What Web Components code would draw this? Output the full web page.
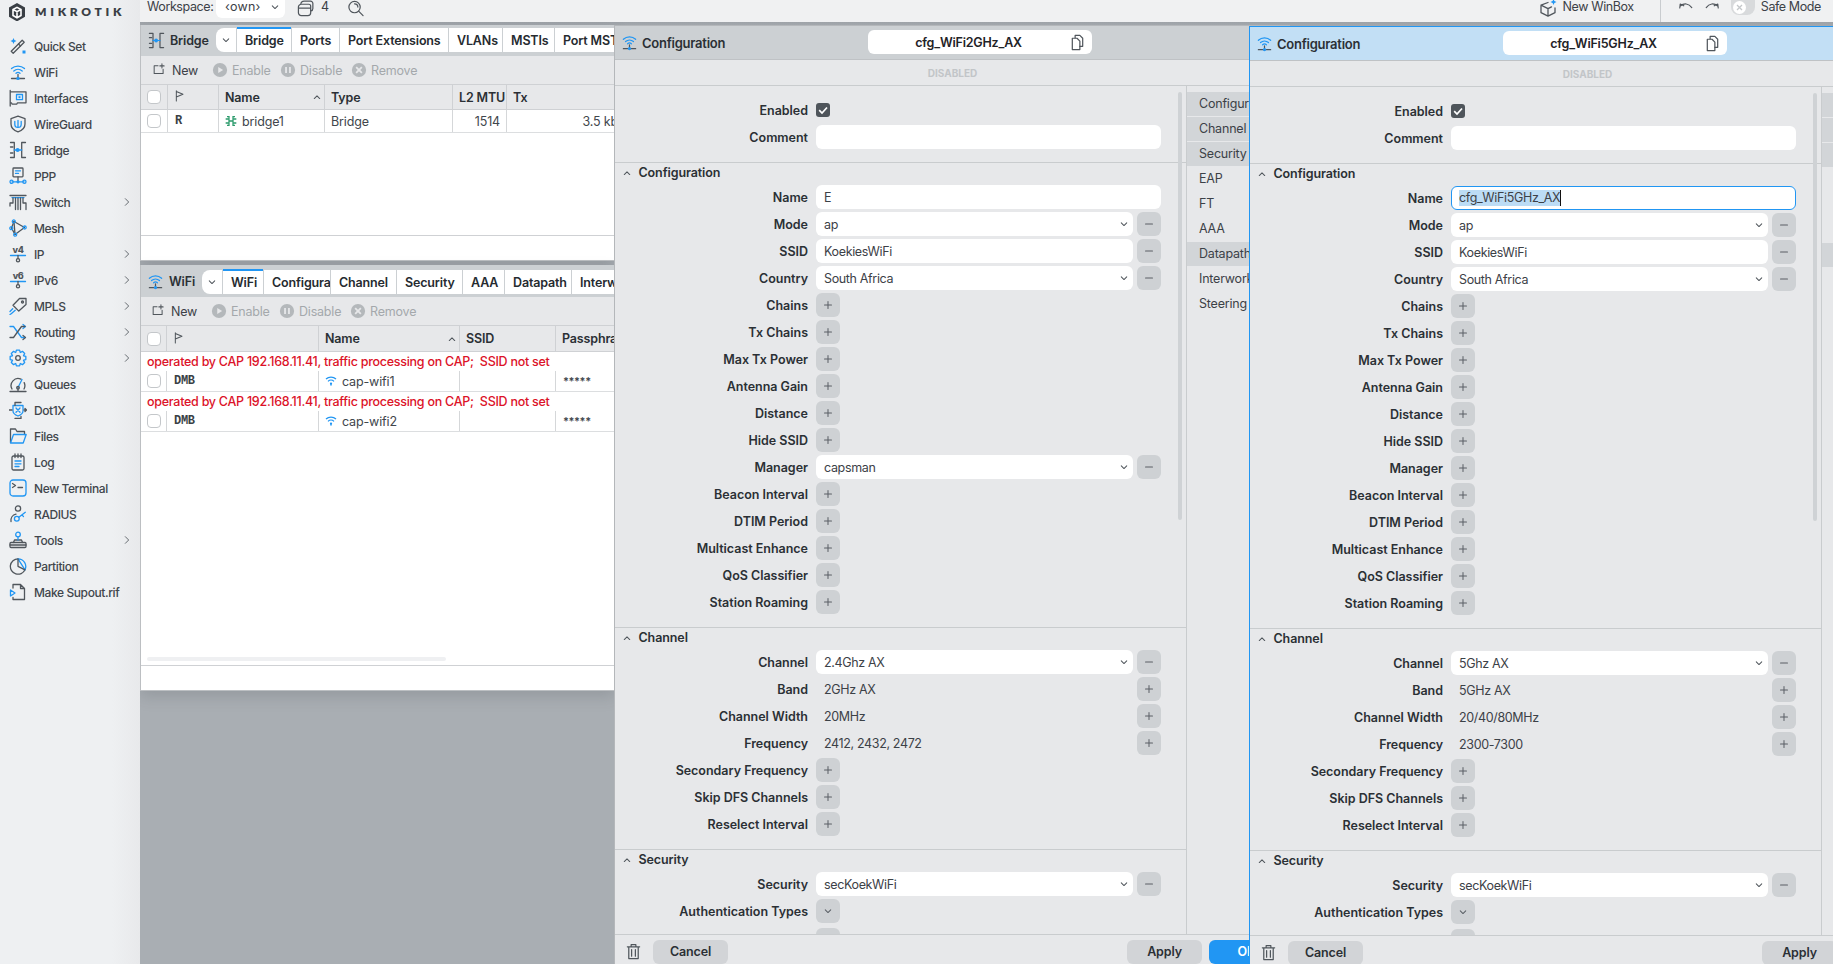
<!doctype html>
<html><head><meta charset="utf-8"><title>WinBox</title>
<style>
html,body{margin:0;height:100%;overflow:hidden;background:#a9aeb3}
body{font:500 12px Inter,"Liberation Sans",sans-serif;color:#2b3035;letter-spacing:-.1px}
</style></head><body>
<mt-app></mt-app>
<script>
const gear=(()=>{let d='',n=8;for(let i=0;i<n;i++){const a=i*2*Math.PI/n;const p=(r,o)=>[(9+r*Math.cos(a+o)).toFixed(2),(9+r*Math.sin(a+o)).toFixed(2)].join(' ');d+=(i?'L':'M')+p(6,-.38)+'L'+p(8,-.2)+'L'+p(8,.2)+'L'+p(6,.38)}return d+'Z'})();
const ICONS={
quickset:'<path class="d" d="M2.2 14.2 13.2 3.2l2 2L4.2 16.2z"/><path class="d" d="M9.5 7l2 2"/><path class="bf" d="M4.5 1l.9 2.1 2.1.9-2.1.9-.9 2.1-.9-2.1L1.5 4l2.1-.9z"/><rect class="bf" x="13.5" y="13.5" width="3" height="3"/>',
wifi:'<path class="b" d="M2.5 5.6a9.6 9.6 0 0 1 13 0M4.8 8a6.4 6.4 0 0 1 8.4 0M7 10.3a3 3 0 0 1 4 0"/><path class="d" d="M9 11.5v4M2.5 15.5h13"/><circle class="bf" cx="9" cy="15.4" r="1.7"/>',
interfaces:'<path class="d" d="M1.2 1.5V17M1.2 2.8H17v11H8.5l-.8 1.4H3.2l-.8-1.4H1.2"/><rect class="b" x="7.5" y="5.500" width="6" height="5.200"/><rect class="bf" x="9.500" y="7.200" width="2" height="2"/>',
wireguard:'<path class="d" d="M9 1.2l7 2.4v5.3c0 4-3 6.6-7 8-4-1.4-7-4-7-8V3.6z"/><path class="b" d="M5.800 6.300v2.900a3.200 3.200 0 0 0 6.400 0V6.300M9 5.300v7"/>',
bridge:'<path class="d" d="M1.500 1.500h3.800v15H1.500M1.500 6h2.300M1.500 12h2.300M16.500 1.500h-3.800v15h3.800"/><path class="b" d="M5.300 9h7.400"/><circle class="bf" cx="8.600" cy="9" r="2"/>',
ppp:'<rect class="d" x="4" y="1" width="10" height="8.800" rx=".8"/><path class="b" d="M6.500 3.800h5M6.500 6.400h3"/><path class="d" d="M9 9.800v5"/><path class="b" d="M3 14.800h12"/><circle class="b" cx="2.600" cy="14.800" r="1.600"/><circle class="b" cx="15.400" cy="14.800" r="1.600"/><circle class="bf" cx="9" cy="14.800" r="1.600"/>',
switch:'<path class="d" stroke-width="1.600" d="M1 2.500h16"/><path class="b" d="M3 4.600h12"/><path class="d" d="M4 5v5H1M1 10v3M6.500 5v11.500M9 5v11.500M11.500 5v11.500M14 5v5h3M17 10v6.500"/>',
mesh:'<path class="d" d="M5 2.500 15.500 8.500 6 15.500z"/><path class="d" d="M2.500 9 5 2.500M2.500 9 6 15.500"/><circle class="b" cx="4.800" cy="2.400" r="1.500"/><circle class="b" cx="2.300" cy="9.200" r="1.500"/><circle class="b" cx="6.200" cy="15.700" r="1.500"/><circle class="b" cx="15.700" cy="8.500" r="1.500"/>',
ipv4:'<text x="9" y="7.600" text-anchor="middle" font-size="9" font-weight="800" fill="#50565c" font-family="Inter">v4</text><path class="b" d="M1.500 10.500h15"/><path class="d" d="M9 10.500v3"/><circle class="d" cx="9" cy="15.200" r="1.600"/>',
ipv6:'<text x="9" y="7.600" text-anchor="middle" font-size="9" font-weight="800" fill="#50565c" font-family="Inter">v6</text><path class="b" d="M1.500 10.500h15"/><path class="d" d="M9 10.500v3"/><circle class="d" cx="9" cy="15.200" r="1.600"/>',
mpls:'<path class="d" d="M17 1.500h-6.500L4 8.300l5.800 5.800L17 7.500z"/><circle class="d" cx="13.500" cy="5" r="1"/><path class="b" d="M1 14.500l2.700-2.700M2.500 16.500l3.700-3.200M1 17.500l1.500-1"/>',
routing:'<path class="b" d="M1 3.500h3.500l8 11H16M14 1.500l2.500 2-2.500 2"/><path class="d" d="M1 14.500h3.500l8-11H16M14 12.500l2.500 2-2.500 2"/>',
system:'<path class="b" d="'+gear+'"/><circle class="d" cx="9" cy="9" r="2.300"/>',
queues:'<path class="d" d="M3 14a7 7 0 0 1 9-9.800M15.200 7.600A7 7 0 0 1 15 14M1 16.500h16M9 13.500v3"/><path class="b" stroke-width="1.600" d="M9 12.500 13 4.500"/><circle class="d" cx="9" cy="12.800" r="1.300"/>',
dot1x:'<path class="b" d="M4 4.500h10v5.500c0 2.500-2.500 4-5 5-2.500-1-5-2.500-5-5z"/><path class="b" d="M7 7l4 4.300M11 7l-4 4.300"/><path class="d" d="M0 9h3M15 9h2.500M16 7.500l1.500 1.500-1.500 1.500M6 4.500V1.500h6M6 17.500h6v-2"/>',
files:'<path class="d" d="M1.500 15.500V2h5l1.500 2.500h7.500v3"/><path class="b" d="M1.500 16h12.700l3-8.500H4.500z"/>',
log:'<rect class="d" x="3" y="3" width="12" height="14" rx="1.500"/><path class="d" d="M6 1v3.500M9 1v3.500M12 1v3.500"/><path class="b" d="M6 8h6M6 10.800h6M6 13.500h4"/>',
terminal:'<rect class="b" x="1" y="1" width="16" height="16" rx="3"/><path class="d" d="M3.500 4.500 6.500 6.500 3.500 8.500M9 8.500h4.500"/>',
radius:'<circle class="d" cx="9" cy="3.500" r="2.600"/><path class="d" d="M2 16.500c-.5-3.500 1.500-6.500 5-7.300"/><circle class="b" cx="7.800" cy="13.800" r="2.400"/><path class="b" d="M9.800 12.300l6.500-5M13 9.800l1.500 1.800"/>',
tools:'<rect class="d" x="1" y="11.500" width="16" height="5" rx="1"/><path class="d" d="M1 14h16M4.500 11.500l1-2.500h7l1 2.500"/><path class="b" d="M9 6v3"/><circle class="b" cx="9" cy="3.500" r="2.300"/>',
partition:'<path class="d" d="M9 1.800a7.700 7.700 0 1 0 7 11"/><path class="b" d="M9 1.800a7.700 7.700 0 0 1 7 11z"/><path class="d" d="M9 1.800v7.500l7 3.500"/>',
supout:'<path class="d" d="M4 5V1.500h7.500l4 4v11H4V14.500M11.500 1.500v4h4"/><path class="b" d="M1.500 7l4.500 3-4.500 3z"/>',
'new':'<path class="d" d="M6.500 3.500H1.500V13.500H13V8M11.500 1v5.500M8.800 3.700h5.500"/>',
flag:'<path class="d" stroke-width="1.500" d="M3 1v13M3 2l8.500 3.500L3 9"/>',
chev:'<path class="d" d="M5.500 7.500 9 11l3.500-3.500" stroke-width="1.800"/>',
up:'<path class="d" d="M5.500 11 9 7.500l3.500 3.500" stroke-width="1.800"/>',
right:'<path class="d" d="M6.500 4 11.500 9l-5 5" stroke-width="2"/>',
enable:'<circle cx="9" cy="9" r="8" fill="#b4b8bb"/><path d="M7 5.500v7l5.500-3.500z" fill="#e7e8ea"/>',
disable:'<circle cx="9" cy="9" r="8" fill="#b4b8bb"/><path stroke="#e7e8ea" stroke-width="2" fill="none" d="M6.800 5.500v7M11.200 5.500v7"/>',
remove:'<circle cx="9" cy="9" r="8" fill="#b4b8bb"/><path stroke="#e7e8ea" stroke-width="2" fill="none" d="M5.800 5.800l6.400 6.400M12.200 5.800l-6.400 6.400"/>',
brg:'<path fill="none" stroke="#2c9b6c" stroke-width="1.900" d="M3 2.500h3v13H3M15 2.500h-3v13h3M1 6h4M1 12h4M13 6h4M13 12h4M5 9h8"/>',
wifismall:'<path fill="none" stroke="#2196f3" stroke-width="1.900" d="M1.500 6a11 11 0 0 1 15 0M4.500 9.500a6.500 6.500 0 0 1 9 0"/><circle cx="9" cy="13" r="1.700" fill="#2196f3"/><path stroke="#2196f3" stroke-width="1.600" d="M9 13v3"/>',
copy:'<path class="d" d="M6.500 4V1.500h5l3 3V13H11.500"/><path class="d" d="M3.500 4.500h5l3 3v9h-8z"/>',
trash:'<path class="d" stroke-width="1.500" d="M2.500 4h13M6.500 4V1.800h5V4M4 4v12.500h10V4M7 7v7M11 7v7"/>',
expand:'<path class="d" stroke-width="1.600" d="M2 11v5h5M11 2h5v5"/>',
winbox:'<path class="d" stroke-width="1.500" d="M9 3.500 2 6.200v7.500l7 3.500 7-3.500V9M2 6.200l7 3.500v7.500M9 9.700l3.500-1.800"/><path class="bf" d="M14.500 0l.9 2.100 2.100.9-2.100.9-.9 2.100-.9-2.100-2.100-.9 2.100-.9z"/>',
undo:'<path class="d" stroke-width="1.600" d="M2 9 2.500 4.500 6.500 6.500M3 6.500c3.500-3 9-3 12.500 2"/>',
redo:'<path class="d" stroke-width="1.600" d="M16 9 15.500 4.500 11.500 6.500M15 6.500c-3.500-3-9-3-12.500 2"/>',
stack:'<path class="d" stroke-width="1.500" d="M1.500 7.500a3 3 0 0 1 3-3h8a2 2 0 0 1 2 2v7a3 3 0 0 1-3 3h-7a3 3 0 0 1-3-3zM1.500 8.500h13M4 4.500c0-2 1.500-3.300 3.500-3.300h6.800a2.500 2.500 0 0 1 2.500 2.500V9c0 1.500-1 2.500-2.300 2.800"/>',
search:'<circle class="d" stroke-width="1.500" cx="8" cy="7.500" r="6"/><path class="d" stroke-width="1.500" d="M12.300 11.800 17 16.500M8 4a3.500 3.500 0 0 1 3.500 3.500"/>',
logo:'<path fill="#3a3f45" d="M9 0l8 4.600v9.200L9 18.400 1 13.800V4.600z"/><path fill="none" stroke="#fff" stroke-width="1.600" d="M5 6.500v6l4 2.300 4-2.300v-6L9 4.300zM5 6.500l4 2.200 4-2.200M9 8.700v6"/>',
plus:'<path class="d" stroke-width="2" d="M4.500 9h9M9 4.500v9"/>',
minus:'<path class="d" stroke-width="2.200" d="M4.500 9h9"/>'
};
class MtIcon extends HTMLElement{connectedCallback(){
  const s=this.getAttribute('size')||18,h=this.getAttribute('h')||s;
  this.shadowRoot||this.attachShadow({mode:'open'});
  this.shadowRoot.innerHTML=`<style>:host{display:inline-flex;flex:none;width:${s}px;height:${h}px}svg{display:block}
  .d{fill:none;stroke:${this.getAttribute('color')||'#50565c'};stroke-width:1.3;stroke-linejoin:round;stroke-linecap:round}
  .b{fill:none;stroke:#2196f3;stroke-width:1.3;stroke-linejoin:round;stroke-linecap:round}.bf{fill:#2196f3}</style>
  <svg width="${s}" height="${h}" viewBox="0 0 18 18">${ICONS[this.getAttribute('name')]||''}</svg>`;
}}
customElements.define('mt-icon',MtIcon);

class MtNavItem extends HTMLElement{connectedCallback(){
  this.attachShadow({mode:'open'}).innerHTML=`<style>:host{display:flex;align-items:center;height:26px;padding-left:9px;color:#41464c;font-size:12px;letter-spacing:-.4px}
  .t{margin-left:7px;flex:1;white-space:nowrap}.a{margin-right:7px}</style>
  <mt-icon name="${this.getAttribute('icon')}"></mt-icon><span class="t"><slot></slot></span>${this.hasAttribute('arrow')?'<mt-icon class="a" name="right" size="12"></mt-icon>':''}`;
}}
customElements.define('mt-nav-item',MtNavItem);

class MtSidebar extends HTMLElement{connectedCallback(){
  const items=[['quickset','Quick Set'],['wifi','WiFi'],['interfaces','Interfaces'],['wireguard','WireGuard'],['bridge','Bridge'],['ppp','PPP'],['switch','Switch',1],['mesh','Mesh'],['ipv4','IP',1],['ipv6','IPv6',1],['mpls','MPLS',1],['routing','Routing',1],['system','System',1],['queues','Queues'],['dot1x','Dot1X'],['files','Files'],['log','Log'],['terminal','New Terminal'],['radius','RADIUS'],['tools','Tools',1],['partition','Partition'],['supout','Make Supout.rif']];
  this.attachShadow({mode:'open'}).innerHTML=`<style>:host{display:block;width:140px;flex:none;background:linear-gradient(90deg,#eef0f2 80%,#e8e9eb);overflow:hidden}
  .logo{display:flex;align-items:center;height:33px;padding:0 0 9px 8px;box-sizing:border-box}
  .w{margin-left:9px;font:800 12px Lato,Inter,sans-serif;letter-spacing:3.700px;color:#3a3f45;line-height:1}</style>
  <div class="logo"><mt-icon name="logo" size="18"></mt-icon><span class="w">MIKROTIK</span></div>
  ${items.map(i=>`<mt-nav-item icon="${i[0]}" ${i[2]?'arrow':''}>${i[1]}</mt-nav-item>`).join('')}`;
}}
customElements.define('mt-sidebar',MtSidebar);

class MtTopbar extends HTMLElement{connectedCallback(){
  this.attachShadow({mode:'open'}).innerHTML=`<style>:host{display:flex;height:22px;box-sizing:border-box;background:#f0f1f2;font-size:12.500px;font-weight:400;letter-spacing:-.4px;color:#3c4147;line-height:13px;align-items:flex-start;overflow:hidden}
  span{white-space:nowrap}.ws{margin-left:7px;width:69px}.sel{width:69px;height:18px;background:#fff;border-radius:0 0 6px 6px;display:flex;align-items:flex-start;box-sizing:border-box;padding-left:9px}
  .sel span{flex:1;letter-spacing:.2px}.sep{width:1px;height:22px;background:#c9cccf}
  .sp{flex:1}.kn{width:13px;height:13px;border-radius:50%;background:#fff;display:flex}</style>
  <span class="ws">Workspace:</span><div class="sel"><span>‹own›</span><mt-icon name="chev" size="14" style="margin-right:3px"></mt-icon></div>
  <mt-icon name="stack" size="17" style="margin-left:12px"></mt-icon><span style="margin-left:7px">4</span><mt-icon name="search" size="17" style="margin-left:18px"></mt-icon>
  <span class="sp"></span>
  <mt-icon name="winbox" size="18" style="margin-top:-1px"></mt-icon><span style="margin-left:6px">New WinBox</span>
  <div class="sep" style="margin-left:26px"></div>
  <mt-icon name="undo" size="16" style="margin:0 0 0 17px"></mt-icon><mt-icon name="redo" size="16" style="margin-left:10px"></mt-icon>
  <div style="margin-left:11px;width:24px;height:15px;border-radius:0 0 8px 8px;background:#d8dadc;display:flex;padding:1px 0 0 2px;box-sizing:border-box"><div class="kn"><svg width="13" height="13" viewBox="0 0 13 13"><path d="M4 4l5 5M9 4l-5 5" stroke="#c4c7ca" stroke-width="1.300" fill="none"/></svg></div></div>
  <span style="margin-left:6px">Safe Mode</span><div style="width:12px"></div>`;
}}
customElements.define('mt-topbar',MtTopbar);

class MtTabs extends HTMLElement{connectedCallback(){
  const t=JSON.parse(this.getAttribute('tabs'));const top=this.getAttribute('top');const h=this.getAttribute('height');
  this.attachShadow({mode:'open'}).innerHTML=`<style>:host{display:flex;flex:1;min-width:0;overflow:hidden;padding-top:${top}px;font-weight:600;font-size:12.5px;letter-spacing:-.15px;color:#262b30}
  div{height:${h}px;box-sizing:border-box;background:#fff;margin-right:1px;flex:none;white-space:nowrap;overflow:hidden;display:flex;align-items:center;padding:0 0 0 8px}
  .a{border-top:2px solid #2196f3;margin-top:-1px;height:${+h+1}px}
  .dd{width:20px;padding:0 0 0 3px;border-radius:8px 0 0 8px}</style>
  <div class="dd"><mt-icon name="chev" size="14"></mt-icon></div>
  ${t.map((x,i)=>`<div class="${i==0?'a':''}" style="width:${x[1]}px">${x[0]}</div>`).join('')}`;
}}
customElements.define('mt-tabs',MtTabs);

class MtToolbar extends HTMLElement{connectedCallback(){
  const l=this.getAttribute('left');
  this.attachShadow({mode:'open'}).innerHTML=`<style>:host{display:flex;height:28px;align-items:center;padding-left:${l}px;border-bottom:1px solid #cfd1d4;background:#e7e8ea;font-weight:400;font-size:12.5px;letter-spacing:-.2px;color:#a4a8ac;flex:none}
  div{display:flex;align-items:center;gap:4px;flex:none}.n{color:#3c4147;gap:5px}</style>
  <div class="n" style="width:59px"><mt-icon name="new" size="14"></mt-icon>New</div>
  <div style="width:68px"><mt-icon name="enable" size="16"></mt-icon>Enable</div>
  <div style="width:71px"><mt-icon name="disable" size="16"></mt-icon>Disable</div>
  <div><mt-icon name="remove" size="16"></mt-icon>Remove</div>`;
}}
customElements.define('mt-toolbar',MtToolbar);

class MtCheck extends HTMLElement{connectedCallback(){
  this.attachShadow({mode:'open'}).innerHTML=`<style>:host{display:block;width:14px;height:14px;box-sizing:border-box;background:#fff;border:1px solid #c4c7ca;border-radius:4px;flex:none}</style>`;
}}
customElements.define('mt-check',MtCheck);

class MtTable extends HTMLElement{
  set data(d){this._d=d;this.render()}
  render(){
    const d=this._d,cols=d.cols,tpl=cols.join('px ')+'px';
    const hcell=c=>`<div class="c ${c.sort?'s':''}">${c.check?'<mt-check></mt-check>':c.flag?'<mt-icon name="flag" size="14"></mt-icon>':`<span>${c.t}</span>`}${c.sort?'<mt-icon name="up" size="14"></mt-icon>':''}</div>`;
    const bcell=c=>`<div class="c ${c.r?'r':''} ${c.m?'m':''} ${c.st?'st':''}">${c.check?'<mt-check></mt-check>':c.icon?`<mt-icon name="${c.icon}" size="12"></mt-icon><span style="margin-left:5px">${c.t}</span>`:`<span>${c.t||''}</span>`}</div>`;
    this.shadowRoot.innerHTML=`<style>:host{display:block;flex:1;background:#fff;overflow:hidden;min-height:0}
    .h,.b{display:grid;grid-template-columns:${tpl};}
    .h{height:${d.hh}px;background:#e7e8ea;border-bottom:1px solid #cfd1d4;font-size:12.5px;font-weight:600;letter-spacing:-.15px;color:#2b3035}
    .b{height:${d.rh}px;font-size:12.5px;font-weight:400;letter-spacing:-.15px;color:#41464c}
    .row{border-bottom:1px solid #dcdee0}
    .c{display:flex;align-items:center;padding-left:6px;border-right:1px solid #d5d7d9;box-sizing:border-box;white-space:nowrap;overflow:hidden;min-width:0}
    .h .c{border-right-color:#cfd1d4}
    .s{justify-content:space-between;padding-right:0}.r{justify-content:flex-end;padding-right:6px}
    .m{font:700 12px "Liberation Mono",monospace;color:#3a3f45;letter-spacing:-.3px;padding-left:7px}
    .st{font-size:11px;font-weight:600;letter-spacing:-.4px;padding-left:7px}
    .msg{height:19px;line-height:20px;padding-left:6px;color:#dc1228;font-size:12.5px;font-weight:500;letter-spacing:-.265px;white-space:nowrap}</style>
    <div class="h">${d.head.map(hcell).join('')}</div>
    ${d.rows.map(r=>`<div class="row">${r.msg?`<div class="msg">${r.msg}</div>`:''}<div class="b">${r.cells.map(bcell).join('')}</div></div>`).join('')}`;
  }
}
customElements.define('mt-table',MtTable);

class MtListWindow extends HTMLElement{connectedCallback(){
  const c=DATA[this.getAttribute('kind')];
  const r=this.attachShadow({mode:'open'});
  r.innerHTML=`<style>:host{position:absolute;left:${c.x}px;top:${c.y}px;width:475px;height:${c.h}px;box-sizing:border-box;border:1px solid #bcbfc2;border-top:0;display:flex;flex-direction:column;background:#fff;overflow:hidden;box-shadow:0 6px 14px rgba(60,65,70,.18)}
  .hd{display:flex;height:${c.hdh}px;flex:none;background:#ccd0d3;}
  .t{width:${c.tw}px;flex:none;display:flex;align-items:center;padding-left:${c.il}px;box-sizing:border-box;font-weight:600;font-size:12.5px;gap:${c.ig}px;letter-spacing:-.15px}
  .sb{height:4px;background:#eff0f2;border-radius:2px;width:299px;margin:0 0 4px 6px;flex:none}
  .ft{height:${c.ft}px;flex:none;border-top:1px solid #cfd1d4;background:#fff}</style>
  <div class="hd"><div class="t"><mt-icon name="${c.icon}" size="17"></mt-icon>${c.title}</div><mt-tabs top="${c.tt}" height="${c.th}" tabs='${JSON.stringify(c.tabs)}'></mt-tabs></div>
  <mt-toolbar left="${c.tl}"></mt-toolbar><mt-table></mt-table>${c.sb?'<div class="sb"></div>':''}<div class="ft"></div>`;
  const t=r.querySelector('mt-table');t.attachShadow({mode:'open'});t.data=c.table;
}}
customElements.define('mt-list-window',MtListWindow);

class MtField extends HTMLElement{connectedCallback(){
  const a=k=>this.getAttribute(k),k=a('type'),v=a('value')||'',side=a('side');
  const btn=g=>`<button><mt-icon name="${g}" size="14" color="#5a5f65"></mt-icon></button>`;
  let m='';
  if(k=='check')m=`<div class="ck"><svg width="14" height="14" viewBox="0 0 14 14"><path d="M3.200 7.200 6 10l5-5.500" fill="none" stroke="#fff" stroke-width="1.700"/></svg></div>`;
  else if(k=='btn')m=btn(a('glyph'));
  else{
    const txt=a('focus')!=null?`<span class="sel">${v}</span>`:`<span>${v}</span>`;
    m=`<div class="box ${k} ${a('focus')!=null?'f':''}">${txt}${k=='select'?'<mt-icon name="chev" size="14" color="#50565c"></mt-icon>':''}</div>${side?btn(side):''}`;
  }
  this.attachShadow({mode:'open'}).innerHTML=`<style>:host{display:flex;gap:4px;align-items:center;height:24px;font-size:12.500px;font-weight:400;letter-spacing:-.35px;color:#3c4147}
  .box{flex:1;height:24px;box-sizing:border-box;background:#fff;border-radius:6px;display:flex;align-items:center;padding:0 2px 0 8px;min-width:0;white-space:nowrap}
  .box span{flex:none}.box.select span{flex:1}
  .readonly{background:none}
  .f{border:1px solid #2196f3;padding-left:7px}
  .f span.sel{background:#bcdcf5;border-right:1px solid #111;height:16px;line-height:16px;color:#3c4147}
  button{all:unset;display:flex;align-items:center;justify-content:center;width:24px;height:24px;flex:none;border-radius:6px;background:#ced1d4}
  .ck{width:14px;height:14px;border-radius:3px;background:#4f555b}.ck svg{display:block}</style>${m}`;
}}
customElements.define('mt-field',MtField);

class MtFormRow extends HTMLElement{connectedCallback(){
  this.attachShadow({mode:'open'}).innerHTML=`<style>:host{display:grid;grid-template-columns:193px 1fr;column-gap:8px;height:24px;align-items:center;padding-right:25px}
  label{text-align:right;font-weight:600;font-size:12.5px;letter-spacing:-.02px;color:#2b3035;white-space:nowrap}</style>
  <label>${this.getAttribute('label')}</label><div><slot></slot></div>`;
}}
customElements.define('mt-form-row',MtFormRow);

class MtSection extends HTMLElement{connectedCallback(){
  this.attachShadow({mode:'open'}).innerHTML=`<style>:host{display:block;border-top:1px solid #c9ccce;padding-bottom:13px}
  .t{height:22px;display:flex;align-items:center;padding:0 0 3px 5px;gap:2px;font-weight:600;font-size:12.5px;letter-spacing:-.1px;color:#2b3035;box-sizing:border-box}
  .r{display:flex;flex-direction:column;gap:3px}</style>
  <div class="t"><mt-icon name="up" size="14"></mt-icon><span style="margin-left:2.500px">${this.getAttribute('title')}</span></div><div class="r"><slot></slot></div>`;
}}
customElements.define('mt-section',MtSection);

const row=(l,t,v,s,x='')=>`<mt-form-row label="${l}"><mt-field type="${t}" ${v!=null?`value="${v}"`:''} ${s?`side="${s}"`:''} ${x}></mt-field></mt-form-row>`;
const plus=l=>`<mt-form-row label="${l}"><mt-field type="btn" glyph="plus"></mt-field></mt-form-row>`;
class MtConfigWindow extends HTMLElement{connectedCallback(){
  const a=k=>this.getAttribute(k),c=a('active')!=null;
  const s=c?{n:'cfg_WiFi5GHz_AX',name:row('Name','text','cfg_WiFi5GHz_AX','','focus'),mgr:plus('Manager'),ch:'5Ghz AX',band:'5GHz AX',w:'20/40/80MHz',f:'2300-7300'}:
    {n:'cfg_WiFi2GHz_AX',name:row('Name','text','E'),mgr:row('Manager','select','capsman','minus'),ch:'2.4Ghz AX',band:'2GHz AX',w:'20MHz',f:'2412, 2432, 2472'};
  const nav=[['Configuration',1],['Channel',1],['Security',1],['EAP'],['FT'],['AAA'],['Datapath',1],['Interworking'],['Steering']];
  this.attachShadow({mode:'open'}).innerHTML=`<style>:host{position:absolute;left:${a('x')}px;top:${a('y')}px;width:676px;height:939px;box-sizing:border-box;display:flex;flex-direction:column;background:#e7e8ea;overflow:hidden;border-left:1px solid ${c?'#2196f3':'#b4b7ba'};border-top:1px solid ${c?'#2196f3':'#b4b7ba'}}
  .hd{display:grid;grid-template-columns:253px 224px 1fr;height:33px;flex:none;background:${c?'#c2dff5':'#ccd0d3'};border-bottom:1px solid #bfc2c5}
  .tt{display:flex;align-items:center;padding-left:6px;gap:4px;font-weight:600;font-size:13px;letter-spacing:-.25px;color:#2b3035}
  .nm{margin-top:4px;height:24px;background:#fff;border-radius:6px;display:flex;align-items:center;font-weight:600;font-size:12.500px;letter-spacing:-.2px;color:#1f2327}
  .nm span{flex:1;text-align:center}
  .ex{display:flex;align-items:center;justify-content:flex-end;padding-right:20px}
  .st{height:26px;flex:none;border-bottom:1px solid #c9ccce;display:flex;align-items:center;justify-content:center;font-weight:700;font-size:10px;letter-spacing:0;color:#c2c5c8;box-sizing:border-box}
  .md{flex:1;display:flex;min-height:0;overflow:hidden}
  .fm{width:572px;box-sizing:border-box;flex:none;border-right:1px solid #c9ccce;overflow:hidden;position:relative}
  .top{padding:12px 0 13px;display:flex;flex-direction:column;gap:3px}
  .sc{position:absolute;right:4px;top:6px;width:4px;height:428px;border-radius:2px;background:#cfd2d5}
  .nv{flex:1;padding-top:6px;font-weight:400;font-size:12.500px;letter-spacing:-.2px;color:#3c4147}
  .nv div{height:24px;margin-bottom:1px;line-height:24px;padding-left:12px;white-space:nowrap}.nv .on{background:#d2d5d8}
  .ft{height:24px;flex:none;border-top:1px solid #c9ccce;display:flex;align-items:flex-start;padding:5px 6px 0 10px}
  .ft button{all:unset;height:24px;width:75px;border-radius:6px;background:#d2d4d7;text-align:center;line-height:24px;font-weight:600;font-size:12.500px;letter-spacing:-.15px;color:#2b3035;flex:none}
  .ft .ok{background:#2196f3;color:#fff;margin-left:7px}</style>
  <div class="hd"><div class="tt"><mt-icon name="wifi" size="17"></mt-icon>Configuration</div><div class="nm"><span>${s.n}</span><mt-icon name="copy" size="17" style="margin-right:6px"></mt-icon></div><div class="ex"><mt-icon name="expand" size="12"></mt-icon></div></div>
  <div class="st">DISABLED</div>
  <div class="md"><div class="fm">
    <div class="top">${row('Enabled','check')}${row('Comment','text','')}</div>
    <mt-section title="Configuration">${s.name}${row('Mode','select','ap','minus')}${row('SSID','text','KoekiesWiFi','minus')}${row('Country','select','South Africa','minus')}
      ${['Chains','Tx Chains','Max Tx Power','Antenna Gain','Distance','Hide SSID'].map(plus).join('')}${s.mgr}
      ${['Beacon Interval','DTIM Period','Multicast Enhance','QoS Classifier','Station Roaming'].map(plus).join('')}</mt-section>
    <mt-section title="Channel">${row('Channel','select',s.ch,'minus')}${row('Band','readonly',s.band,'plus')}${row('Channel Width','readonly',s.w,'plus')}${row('Frequency','readonly',s.f,'plus')}
      ${['Secondary Frequency','Skip DFS Channels','Reselect Interval'].map(plus).join('')}</mt-section>
    <mt-section title="Security">${row('Security','select','secKoekWiFi','minus')}<mt-form-row label="Authentication Types"><mt-field type="btn" glyph="chev"></mt-field></mt-form-row><mt-form-row label="" style="margin-top:2px"><mt-field type="btn" glyph="chev"></mt-field></mt-form-row></mt-section>
    <div class="sc"></div></div>
    <div class="nv">${nav.map(n=>`<div class="${n[1]?'on':''}">${c?'&nbsp;':n[0]}</div>`).join('')}</div></div>
  <div class="ft"><mt-icon name="trash" size="17" style="margin:3px 11px 0 0"></mt-icon><button>Cancel</button><span style="flex:1"></span><button>Apply</button><button class="ok">${c?'':'OK'}</button></div>`;
}}
customElements.define('mt-config-window',MtConfigWindow);

const DATA={
 bridge:{x:0,y:3,h:236,hdh:31,title:'Bridge',icon:'bridge',tw:75,il:7,ig:5,tt:3,th:24,tl:12,ft:24,
  tabs:[['Bridge',54],['Ports',47],['Port Extensions',108],['VLANs',53],['MSTIs',51],['Port MST',80]],
  table:{cols:[27,51,106,128,54,132],hh:24,rh:22,
   head:[{check:1},{flag:1},{t:'Name',sort:1},{t:'Type'},{t:'L2 MTU'},{t:'Tx'}],
   rows:[{cells:[{check:1},{t:'R',m:1},{t:'bridge1',icon:'brg'},{t:'Bridge'},{t:'1514',r:1},{t:'3.5 kbps',r:1}]}]}},
 wifi:{x:0,y:243,h:426,hdh:32,title:'WiFi',icon:'wifi',tw:61,il:6,ig:5,tt:5,th:24,tl:11,ft:24,sb:1,
  tabs:[['WiFi',40],['Configura',66],['Channel',65],['Security',65],['AAA',41],['Datapath',66],['Interw',60]],
  table:{cols:[26,152,141,96,120],hh:25,rh:20,
   head:[{check:1},{flag:1},{t:'Name',sort:1},{t:'SSID'},{t:'Passphrase'}],
   rows:[1,2].map(i=>({msg:'operated by CAP 192.168.11.41, traffic processing on CAP;&nbsp; SSID not set',cells:[{check:1},{t:'DMB',m:1},{t:'cap-wifi'+i,icon:'wifismall'},{t:''},{t:'*****',st:1}]}))}}
};

class MtDesktop extends HTMLElement{connectedCallback(){
  this.attachShadow({mode:'open'}).innerHTML=`<style>:host{display:block;flex:1;position:relative;overflow:hidden;background:linear-gradient(#9ea3a8,#a9aeb3 8px)}</style>
  <mt-list-window kind="bridge"></mt-list-window><mt-list-window kind="wifi"></mt-list-window>
  <mt-config-window x="474" y="3"></mt-config-window><mt-config-window x="1109" y="4" active></mt-config-window>`;
}}
customElements.define('mt-desktop',MtDesktop);

class MtApp extends HTMLElement{connectedCallback(){
  this.attachShadow({mode:'open'}).innerHTML=`<style>:host{display:flex;width:1833px;height:964px;overflow:hidden}
  .m{flex:1;display:flex;flex-direction:column;min-width:0}</style>
  <mt-sidebar></mt-sidebar><div class="m"><mt-topbar></mt-topbar><mt-desktop></mt-desktop></div>`;
}}
customElements.define('mt-app',MtApp);
</script>
</body></html>
